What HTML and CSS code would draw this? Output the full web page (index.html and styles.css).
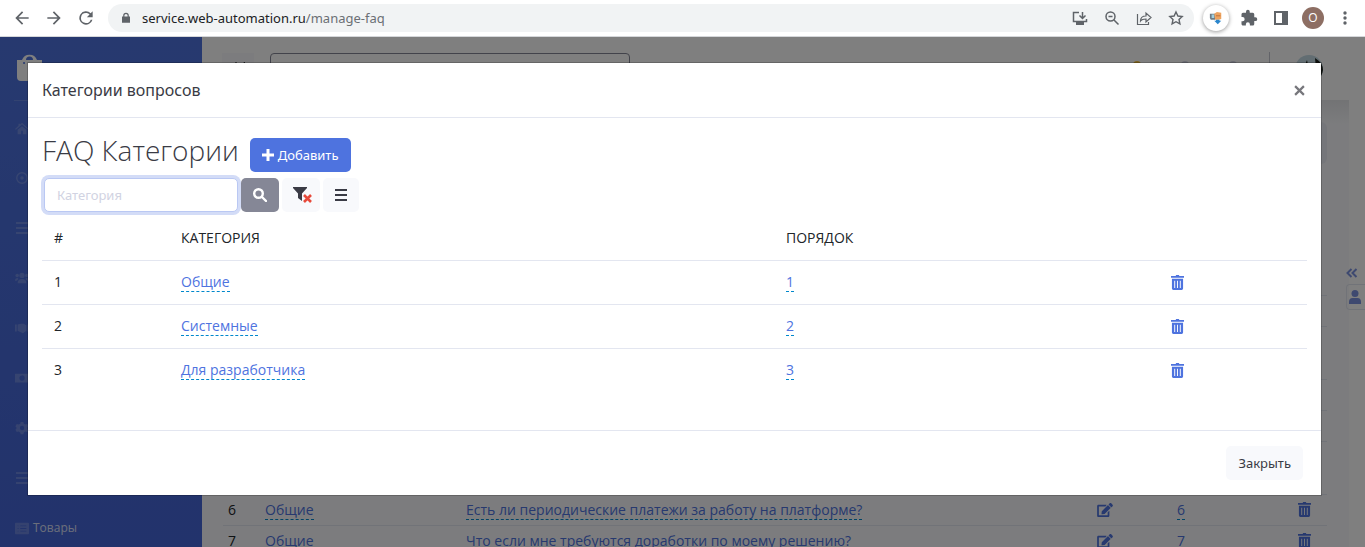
FILE: index.html
```
<!DOCTYPE html>
<html lang="ru">
<head>
    <meta charset="UTF-8">
    <meta name="viewport" content="width=device-width, initial-scale=1.0">
    <title>Категории вопросов</title>
    <link rel="stylesheet" href="styles.css">
</head>
<body>
<svg class="sprite" aria-hidden="true">
    <symbol id="trash" viewBox="0 0 14 16">
        <path fill-rule="evenodd" d="M5 1 5.500 0h3L9 1h5v2H0V1zM1 4h12v10.500q0 1.500-1.500 1.500h-9q-1.500 0-1.500-1.500zM3.500 6v8h1V6zm3 0v8h1V6zm3 0v8h1V6z"/>
    </symbol>
    <symbol id="edit" viewBox="0 0 576 512">
        <path d="M402.600 83.200l90.200 90.200c3.800 3.800 3.800 10 0 13.800L274.400 405.600l-92.800 10.300c-12.400 1.400-22.900-9.100-21.500-21.500l10.300-92.800L388.800 83.200c3.800-3.800 10-3.800 13.800 0zm162-22.900l-48.800-48.800c-15.200-15.200-39.900-15.200-55.200 0l-35.400 35.400c-3.800 3.800-3.800 10 0 13.800l90.200 90.200c3.800 3.800 10 3.800 13.800 0l35.400-35.400c15.200-15.300 15.200-40 0-55.200zM384 346.200V448H64V128h229.800c3.200 0 6.200-1.300 8.500-3.500l40-40c7.600-7.600 2.200-20.500-8.500-20.500H48C21.500 64 0 85.500 0 112v352c0 26.500 21.500 48 48 48h352c26.500 0 48-21.500 48-48V306.200c0-10.700-12.900-16-20.500-8.500l-40 40c-2.200 2.300-3.500 5.300-3.500 8.500z"/>
    </symbol>
    <symbol id="bars" viewBox="0 0 14 14">
        <path d="M1 1h12v2H1zM1 6h12v2H1zM1 11h12v2H1z"/>
    </symbol>
</svg>

<header class="browser">
    <button class="nav-btn" aria-label="Назад"><svg viewBox="0 0 24 24"><path d="M20 11H7.800l5.600-5.600L12 4l-8 8 8 8 1.400-1.400L7.800 13H20z"/></svg></button>
    <button class="nav-btn" aria-label="Вперёд"><svg viewBox="0 0 24 24"><path d="M12 4l-1.400 1.400 5.600 5.600H4v2h12.200l-5.600 5.600L12 20l8-8z"/></svg></button>
    <button class="nav-btn" aria-label="Обновить"><svg viewBox="0 0 24 24"><path d="M17.650 6.350A8 8 0 1 0 19.730 14h-2.080A6 6 0 1 1 12 6c1.660 0 3.140.69 4.220 1.780L13 11h7V4z"/></svg></button>
    <div class="address">
        <svg class="lock" viewBox="0 0 10 14"><path fill-rule="evenodd" d="M0 5h1.500V4a3.500 3.500 0 0 1 7 0v1H10v8H0zm3 0h4V4a2 2 0 0 0-4 0z"/></svg>
        <span class="url">service.web-automation.ru<span>/manage-faq</span></span>
        <svg viewBox="0 0 18 18"><path d="M8 3.500H2.500v9h13V10M11.500 3v6M8.500 6.500l3 3 3-3" fill="none" stroke="#5f6368" stroke-width="1.500"/><path d="M5 13h8v3H5z"/></svg>
        <svg viewBox="0 0 18 18"><path d="M7.500 3a4.500 4.500 0 1 0 0 9 4.500 4.500 0 0 0 0-9zM11 11l4.500 4.500M5.500 7.500h4" fill="none" stroke="#5f6368" stroke-width="1.500"/></svg>
        <svg viewBox="0 0 18 18"><path d="M2.500 5v10.500h11V13M5.500 12c0-3 2-5 5.500-5V4l5 4.500-5 4.500v-3c-3 0-4.500.5-5.500 2z" fill="none" stroke="#5f6368" stroke-width="1.200"/></svg>
        <svg viewBox="0 0 18 18"><path d="M9 3l1.900 4 4.300.5-3.200 3 .9 4.300L9 12.700l-3.900 2.100.9-4.300-3.200-3L7.100 7z" fill="none" stroke="#5f6368" stroke-width="1.400"/></svg>
    </div>
    <div class="extensions">
        <span class="ext"><svg viewBox="0 0 16 16"><path fill="#6d7b85" d="M1 3h6v7H2L1 8z"/><path fill="#9fd0e0" d="M3 4h3v4H3z"/><path fill="#eda35f" d="M6 3l3-2 5 1v7l-3 1H7z"/><path fill="#b86c38" d="M8 5h5v1H8z"/><path fill="#2b86cc" d="M6 11h2v-1h4v1h2l-4 4z"/></svg></span>
        <svg viewBox="0 0 24 24"><path d="M20.500 11H19V7a2 2 0 0 0-2-2h-4V3.500a2.500 2.500 0 0 0-5 0V5H4a2 2 0 0 0-2 2v3.800h1.500a2.700 2.700 0 0 1 0 5.400H2V20c0 1.100.9 2 2 2h3.800v-1.500a2.700 2.700 0 0 1 5.400 0V22H17a2 2 0 0 0 2-2v-4h1.500a2.500 2.500 0 0 0 0-5z"/></svg>
        <svg class="panel" viewBox="0 0 14 14"><path fill-rule="evenodd" d="M0 0h14v14H0zM2 2v10h6V2z"/></svg>
        <span class="account">O</span>
        <svg class="dots" viewBox="0 0 4 14"><circle cx="2" cy="2" r="1.700"/><circle cx="2" cy="7" r="1.700"/><circle cx="2" cy="12" r="1.700"/></svg>
    </div>
</header>

<div class="app">
    <nav class="sidebar">
        <div class="brand">
            <svg viewBox="0 0 28 32"><path fill-rule="evenodd" d="M2 9h4a8 8 0 0 1 15 0h5v21H5q-4 0-4-4V9zM10 9h7a3.500 3.500 0 0 0-7 0zM8 11a1 1 0 1 0 .1 2 1 1 0 0 0-.1-2z"/></svg>
        </div>
        <ul class="menu">
            <li><svg viewBox="0 0 16 16"><path d="M8 2l8 7-1 1-7-6-7 6-1-1 4-3.500V3h2v1zM8 6l5 4v5H9v-4H7v4H3v-5z"/></svg></li>
            <li><svg viewBox="0 0 16 16"><circle cx="8" cy="8" r="6" fill="none" stroke="#fff" stroke-width="1.500"/><circle cx="8" cy="8" r="2"/></svg></li>
            <li><svg viewBox="0 0 14 14"><use href="#bars"/></svg></li>
            <li><svg viewBox="0 0 16 16"><circle cx="8" cy="5" r="3"/><circle cx="2.500" cy="5" r="2"/><circle cx="13.500" cy="5" r="2"/><path d="M3 14q0-5 5-5t5 5zM0 11q0-3 3-3l1 1-2 2zM16 11q0-3-3-3l-1 1 2 2z"/></svg></li>
            <li><svg viewBox="0 0 16 16"><path d="M0 4h2v8H0zM3 4l4-1h3l3 2v6l-4 3-6-3zM14 4h2v8h-2z"/></svg></li>
            <li><svg viewBox="0 0 16 16"><path fill-rule="evenodd" d="M0 3h16v10H0zM8 5a3 3 0 1 0 .1 6A3 3 0 0 0 8 5z"/></svg></li>
            <li><svg viewBox="0 0 16 16"><path fill-rule="evenodd" d="M6.500 1h3l.5 2 2 1 2-.5 1.500 2.500L14 8l1.500 2-1.500 2.500-2-.5-2 1-.5 2h-3L6 13l-2-1-2 .5L.5 10 2 8 .5 6 2 3.500 4 4l2-1zM8 5.500a2.500 2.500 0 1 0 .1 5 2.500 2.500 0 0 0-.1-5z"/></svg></li>
            <li><svg viewBox="0 0 14 14"><use href="#bars"/></svg></li>
            <li><svg viewBox="0 0 16 16"><path fill-rule="evenodd" d="M1 2h14q1 0 1 1v11q0 1-1 1H1q-1 0-1-1V3q0-1 1-1zM3 5v1h1V5zm3 0v1h7V5zM3 8v1h1V8zm3 0v1h7V8zM3 11v1h1v-1zm3 0v1h7v-1z"/></svg><a href="#">Товары</a></li>
        </ul>
    </nav>

    <div class="content">
        <div class="topbar">
            <button class="toggle" aria-label="Меню"><svg viewBox="0 0 16 16"><path d="M2 4l3-3 3 3zM8 4h6V1z"/></svg></button>
            <div class="top-search"></div>
            <div class="top-icons">
                <i class="bell"></i>
                <i class="mail"></i>
                <i class="tasks"></i>
            </div>
            <svg class="avatar" viewBox="0 0 28 28"><circle cx="14" cy="14" r="14" fill="#c5dbe4"/><path fill="#1b211b" d="M10 10l2-5 1 5zM20 3q8 5 8 12-1 7-6 10z"/></svg>
        </div>
        <div class="page">
            <div class="page-title"></div>
            <table class="faq">
                <tbody>
                <tr class="head"><td class="n"></td><td class="cat"></td><td class="q"></td><td class="ed"></td><td class="ord"></td><td></td></tr>
                <tr><td colspan="6"></td></tr>
                <tr class="tall"><td colspan="6"></td></tr>
                <tr><td colspan="6"></td></tr>
                <tr><td colspan="6"></td></tr>
                <tr class="tall"><td colspan="6"></td></tr>
                <tr>
                    <td>6</td>
                    <td><a class="editable" href="#">Общие</a></td>
                    <td><a class="editable" href="#">Есть ли периодические платежи за работу на платформе?</a></td>
                    <td><svg class="edit"><use href="#edit"/></svg></td>
                    <td><a class="editable" href="#">6</a></td>
                    <td><svg class="trash"><use href="#trash"/></svg></td>
                </tr>
                <tr>
                    <td>7</td>
                    <td><a class="editable" href="#">Общие</a></td>
                    <td><a class="editable" href="#">Что если мне требуются доработки по моему решению?</a></td>
                    <td><svg class="edit"><use href="#edit"/></svg></td>
                    <td><a class="editable" href="#">7</a></td>
                    <td><svg class="trash"><use href="#trash"/></svg></td>
                </tr>
                </tbody>
            </table>
        </div>
    </div>

    <aside class="drawer">
        <svg class="chevrons" viewBox="0 0 12 10"><path d="M5.500 1l-4 4 4 4M10.500 1l-4 4 4 4" fill="none" stroke="#7d93e0" stroke-width="2"/></svg>
        <div class="user"><svg viewBox="0 0 12 14"><circle cx="6" cy="3.500" r="3.500"/><path d="M0 14v-2q0-4 3.500-4h5Q12 8 12 12v2z"/></svg></div>
    </aside>

    <div class="backdrop">
        <div class="modal" role="dialog" aria-labelledby="modalTitle">
            <div class="modal-header">
                <h5 id="modalTitle">Категории вопросов</h5>
                <button class="close" aria-label="Закрыть окно"><svg viewBox="0 0 10 10"><path d="M1 1l8 8M9 1L1 9"/></svg></button>
            </div>
            <div class="modal-body">
                <div class="title-row">
                    <h1>FAQ Категории</h1>
                    <button class="btn btn-primary"><svg viewBox="0 0 12 12"><path d="M4.500 0h3v4.500H12v3H7.500V12h-3V7.500H0v-3h4.500z"/></svg>Добавить</button>
                </div>
                <form class="filter">
                    <input type="text" placeholder="Категория" aria-label="Категория">
                    <button type="button" class="btn btn-secondary" aria-label="Найти"><svg viewBox="0 0 14 14"><path d="M5.500 1.200a4.300 4.300 0 1 0 0 8.600 4.300 4.300 0 0 0 0-8.600zM9 9l4 4" fill="none" stroke="#fff" stroke-width="2.400" stroke-linecap="round"/></svg></button>
                    <button type="button" class="btn btn-light" aria-label="Сбросить фильтр"><svg class="funnel" viewBox="0 0 20 18"><path d="M0 1h14v1L9 7.500V15l-4-3V7.500L0 2z"/><path d="M11 9l7 7M18 9l-7 7" stroke="#e74a3b" stroke-width="2.600"/></svg></button>
                    <button type="button" class="btn btn-light list" aria-label="Список"><svg><use href="#bars"/></svg></button>
                </form>
                <table class="categories">
                    <thead>
                    <tr><th class="num">#</th><th class="name">Категория</th><th class="order">Порядок</th><th class="actions"></th></tr>
                    </thead>
                    <tbody>
                    <tr>
                        <td>1</td>
                        <td><a class="editable" href="#">Общие</a></td>
                        <td><a class="editable" href="#">1</a></td>
                        <td><svg class="trash"><use href="#trash"/></svg></td>
                    </tr>
                    <tr>
                        <td>2</td>
                        <td><a class="editable" href="#">Системные</a></td>
                        <td><a class="editable" href="#">2</a></td>
                        <td><svg class="trash"><use href="#trash"/></svg></td>
                    </tr>
                    <tr>
                        <td>3</td>
                        <td><a class="editable" href="#">Для разработчика</a></td>
                        <td><a class="editable" href="#">3</a></td>
                        <td><svg class="trash"><use href="#trash"/></svg></td>
                    </tr>
                    </tbody>
                </table>
            </div>
            <div class="modal-footer">
                <button class="btn btn-light">Закрыть</button>
            </div>
        </div>
    </div>
</div>
</body>
</html>
```
FILE: styles.css
```
* {
    box-sizing: border-box;
}
body {
    margin: 0;
    height: 100vh;
    display: flex;
    flex-direction: column;
    overflow: hidden;
    font-family: "Open Sans", "Noto Sans", sans-serif;
    font-size: 14px;
    line-height: 20px;
    color: #212529;
}
svg {
    display: block;
    flex: none;
}
button {
    font: inherit;
    border: none;
    background: none;
    padding: 0;
    cursor: pointer;
}
.sprite {
    position: absolute;
    width: 0;
    height: 0;
}

/* browser toolbar */
.browser {
    flex: none;
    display: flex;
    align-items: center;
    height: 37px;
    padding: 0 18px 0 12px;
    border-bottom: 1px solid #d5d7da;
    background: #fff;
}
.browser svg {
    width: 18px;
    height: 18px;
    fill: #5f6368;
}
.nav-btn {
    width: 20px;
    margin-right: 12px;
}
.browser .nav-btn svg {
    width: 20px;
    height: 20px;
}
.address {
    flex: 1;
    display: flex;
    align-items: center;
    gap: 14px;
    height: 28px;
    padding: 0 9px 0 14px;
    border-radius: 14px;
    background: #f1f3f4;
}
.browser .lock {
    width: 8px;
    height: 12px;
}
.url {
    flex: 1;
    margin-left: -2px;
    font-family: "Noto Sans", sans-serif;
    font-size: 13px;
    color: #202124;
}
.url span {
    color: #6b6f74;
}
.extensions {
    display: flex;
    align-items: center;
    margin-left: 9px;
}
.ext {
    display: flex;
    align-items: center;
    justify-content: center;
    width: 26px;
    height: 26px;
    margin-right: 11px;
    border-radius: 50%;
    background: #fff;
    box-shadow: 0 1px 4px rgba(0, 0, 0, 0.4);
}
.browser .ext svg {
    width: 14px;
    height: 14px;
}
.browser .panel {
    width: 14px;
    height: 14px;
    margin: 0 14px 0 16px;
}
.account {
    width: 22px;
    height: 22px;
    border-radius: 50%;
    background: #8d6e63;
    color: #fff;
    font-size: 12px;
    line-height: 22px;
    text-align: center;
}
.browser .dots {
    width: 4px;
    height: 14px;
    margin-left: 19px;
}

/* page under the dialog */
.app {
    position: relative;
    flex: 1;
    min-height: 0;
    display: flex;
    overflow: hidden;
}
.sidebar {
    flex: none;
    width: 202px;
    background: linear-gradient(#4e73df, #4566d8);
}
.brand {
    height: 64px;
    margin: 0 14px;
    padding: 14px 2px 0;
    border-bottom: 1px solid rgba(255, 255, 255, 0.15);
}
.brand svg {
    width: 28px;
    height: 32px;
    fill: #fff;
}
.menu {
    margin: 2px 0 0;
    padding: 0 15px;
    list-style: none;
}
.menu li {
    display: flex;
    align-items: center;
    gap: 4px;
    height: 50px;
}
.menu svg {
    width: 14px;
    height: 14px;
    fill: #fff;
    opacity: 0.2;
}
.menu a {
    font-size: 12px;
    color: rgba(255, 255, 255, 0.8);
    text-decoration: none;
}
.content {
    flex: 1;
    display: flex;
    flex-direction: column;
}
.topbar {
    flex: none;
    display: flex;
    align-items: center;
    height: 63px;
    padding: 0 42px 0 20px;
    background: #fff;
}
.toggle {
    width: 32px;
    height: 32px;
    padding-left: 9px;
    background: #f8f9fc;
}
.toggle svg {
    width: 16px;
    height: 16px;
}
.top-search {
    width: 360px;
    height: 32px;
    margin-left: 16px;
    border: 1px solid #858796;
    border-radius: 4px;
}
.top-icons {
    display: flex;
    gap: 40px;
    height: 34px;
    margin-left: auto;
    padding: 9px 32px 0 0;
    border-right: 1px solid #c5c6d0;
}
.top-icons i {
    width: 8px;
    height: 8px;
    border-radius: 4px;
    background: #d1d3e2;
}
.top-icons .bell {
    background: #f6c23e;
}
.avatar {
    width: 28px;
    height: 28px;
    margin-left: 25px;
}
.page {
    flex: 1;
    margin-right: 16px;
    padding: 22px 22px 0 21px;
    background: linear-gradient(#e6e7ea, #f8f9fc 24px);
}
.page-title {
    height: 42px;
    border-radius: 6px;
    background: #eaecf4;
}
.faq {
    width: 100%;
    margin-top: 88px;
    border-collapse: collapse;
    table-layout: fixed;
}
.faq td {
    height: 31px;
    padding: 0 5px;
    border-bottom: 1px solid #e3e6f0;
}
.faq .head td {
    height: 43px;
}
.faq .tall td {
    height: 53px;
}
.n {
    width: 37px;
}
.cat {
    width: 201px;
}
.ed {
    width: 80px;
}
.ord {
    width: 121px;
}
.faq .q {
    width: auto;
}
.faq .head td:last-child {
    width: 34px;
}
.edit {
    width: 16px;
    height: 14px;
    fill: #4e73df;
}
.trash {
    width: 13px;
    height: 15px;
    fill: #4e73df;
}
.editable {
    color: #4e73df;
    text-decoration: none;
    border-bottom: 1px dashed #0088cc;
}
.drawer {
    position: absolute;
    top: 231px;
    right: 0;
    width: 19px;
}
.chevrons {
    width: 12px;
    height: 10px;
}
.user {
    display: flex;
    align-items: center;
    height: 26px;
    margin-top: 6px;
    padding-left: 2px;
    border: 1px solid #e3e6f0;
    border-right: none;
    border-radius: 4px 0 0 4px;
}
.user svg {
    width: 12px;
    height: 14px;
    fill: #7d93e0;
}

/* dialog */
.backdrop {
    position: absolute;
    inset: 0;
    padding: 26px 44px 0 28px;
    background: rgba(0, 0, 0, 0.5);
}
.modal {
    background: #fff;
    outline: 1px solid rgba(0, 0, 0, 0.2);
}
.modal-header {
    display: flex;
    align-items: center;
    justify-content: space-between;
    height: 55px;
    padding: 0 16px 0 14px;
    border-bottom: 1px solid #e3e6f0;
}
.modal-header h5 {
    margin: 0;
    font-family: "Noto Sans", sans-serif;
    font-size: 16px;
    font-weight: 400;
    color: #3a3b45;
}
.close svg {
    width: 11px;
    height: 11px;
    stroke: #77777c;
    stroke-width: 2;
}
.modal-body {
    padding: 15px 14px 38px;
}
.title-row {
    display: flex;
    align-items: center;
    gap: 11px;
    height: 42px;
}
h1 {
    margin: 0 0 8px;
    font-size: 28px;
    line-height: 36px;
    font-weight: 300;
    color: #3a3b45;
}
.btn {
    display: flex;
    align-items: center;
    justify-content: center;
    gap: 4px;
    height: 34px;
    padding: 0 12px;
    border-radius: 5px;
    font-family: "Noto Sans", sans-serif;
    font-size: 13px;
    color: #3a3b45;
}
.btn svg {
    width: 14px;
    height: 14px;
    fill: currentColor;
}
.btn-primary {
    margin-top: 2px;
    background: #4e73df;
    color: #fff;
}
.btn-primary svg {
    width: 12px;
    height: 12px;
}
.btn-secondary {
    background: #858796;
    color: #fff;
}
.btn-light {
    background: #f8f9fc;
}
.btn .funnel {
    width: 20px;
    height: 18px;
    margin-right: -4px;
}
.filter {
    display: flex;
    gap: 3px;
    margin: 3px 0 5px;
    padding-left: 2px;
}
.filter .btn {
    width: 38px;
}
.filter .list {
    width: 36px;
}
.filter input {
    width: 194px;
    height: 34px;
    padding: 0 12px;
    border: 1px solid #bac8f3;
    border-radius: 5px;
    box-shadow: 0 0 0 3px #d3dcf7;
    font-family: "Noto Sans", sans-serif;
    font-size: 13px;
}
.filter input::placeholder {
    color: #d1d3e2;
}
.categories {
    width: 100%;
    border-collapse: collapse;
    table-layout: fixed;
}
.categories th,
.categories td {
    height: 44px;
    padding: 0 12px;
    text-align: left;
}
.categories thead th {
    height: 43px;
}
.categories tbody tr {
    border-top: 1px solid #e3e6f0;
}
.categories th {
    font-weight: 500;
    text-transform: uppercase;
}
.num {
    width: 127px;
}
.name {
    width: auto;
}
.order {
    width: 385px;
}
.actions {
    width: 148px;
}
.modal-footer {
    display: flex;
    align-items: center;
    justify-content: flex-end;
    height: 65px;
    padding: 0 18px;
    border-top: 1px solid #e3e6f0;
}
```
